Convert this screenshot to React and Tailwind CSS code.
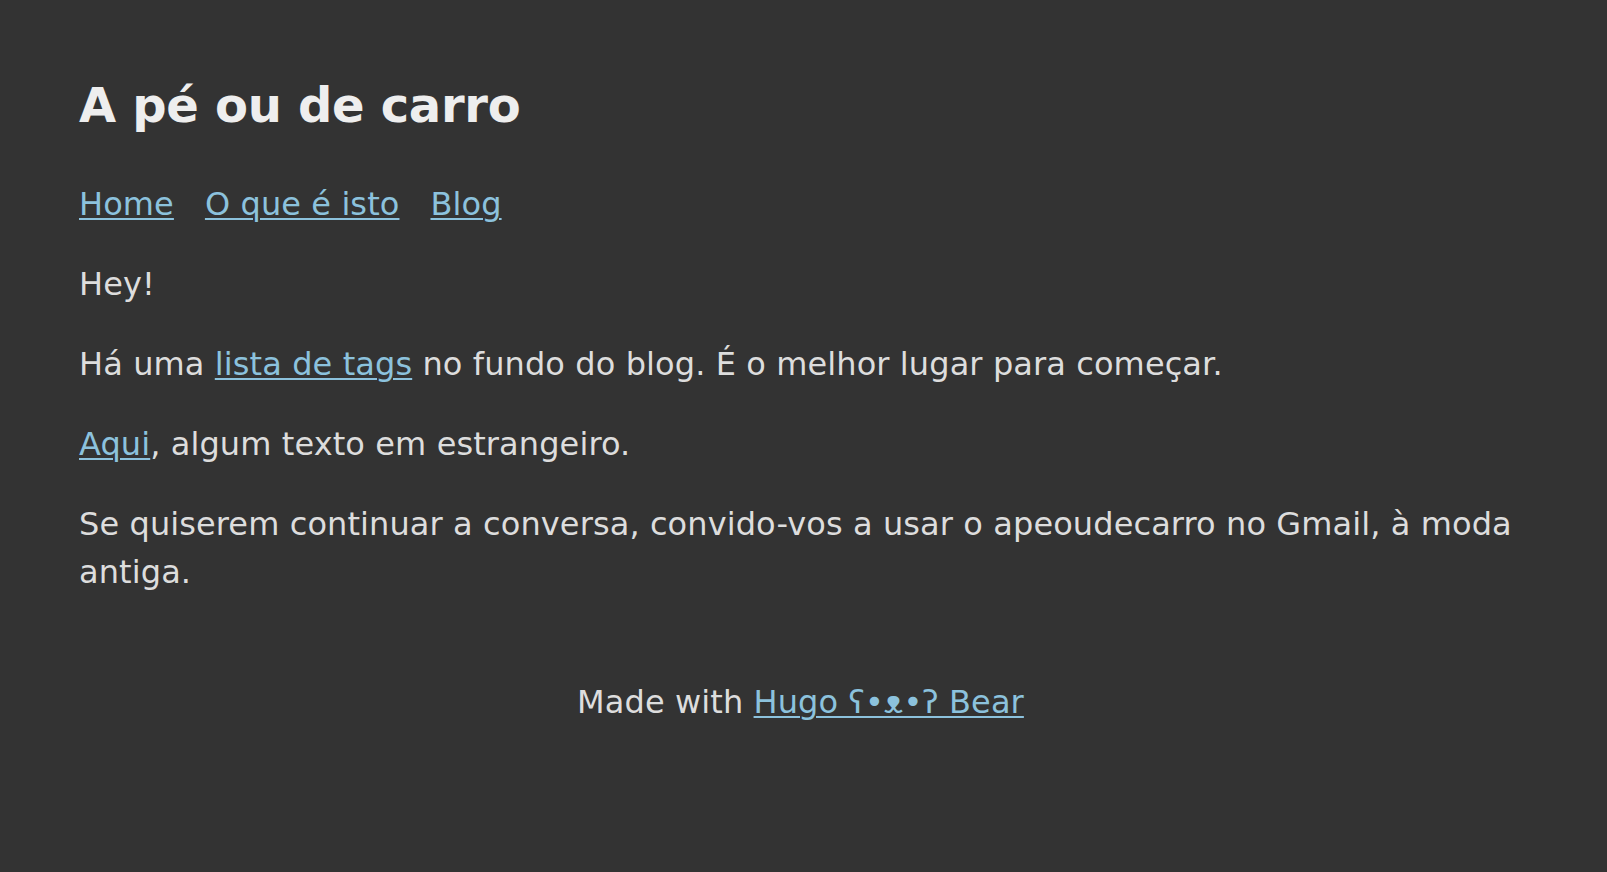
import React from "react";

export default function App() {
  const link = "text-[#8cc2dd] underline underline-offset-[3px] decoration-[2px]";
  return (
    <div className="min-h-[872px] bg-[#333333] text-[#dddddd] font-['DejaVu_Sans',Verdana,sans-serif] text-[32px] leading-[1.5] tracking-[0.1px] px-[79px] pt-[69px]">
      <header>
        <h2 className="text-[48px] font-bold text-[#eeeeee] leading-[72px] tracking-[-0.3px]">A pé ou de carro</h2>
        <nav className="mt-[39px] flex gap-[31px]">
          <a href="#" className={link}>Home</a>
          <a href="#" className={link}>O que é isto</a>
          <a href="#" className={link}>Blog</a>
        </nav>
      </header>
      <main className="mt-[32px] flex flex-col gap-[32px]">
        <p>Hey!</p>
        <p>
          Há uma <a href="#" className={link}>lista de tags</a> no fundo do blog. É o melhor lugar para começar.
        </p>
        <p>
          <a href="#" className={link}>Aqui</a>, algum texto em estrangeiro.
        </p>
        <p>
          Se quiserem continuar a conversa, convido-vos a usar o apeoudecarro no Gmail, à moda antiga.
        </p>
      </main>
      <footer className="mt-[82px] text-center pr-[6px]">
        Made with <a href="#" className={link}>Hugo ʕ•ᴥ•ʔ Bear</a>
      </footer>
    </div>
  );
}
